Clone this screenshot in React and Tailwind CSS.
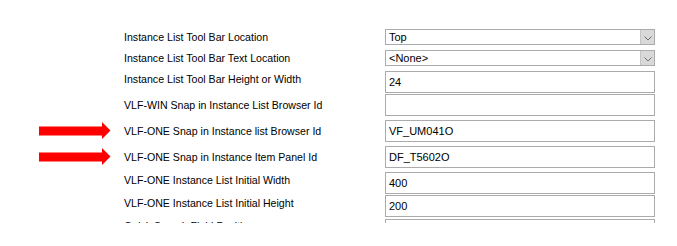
import React from 'react'

const rows = [
  { label: 'Instance List Tool Bar Location', value: 'Top', select: true, top: 'mt-[29px]', h: 'h-[16px]', lift: '' },
  { label: 'Instance List Tool Bar Text Location', value: '<None>', select: true, top: 'mt-[5px]', h: 'h-[16px]', lift: '' },
  { label: 'Instance List Tool Bar Height or Width', value: '24', top: 'mt-[5px]', h: 'h-[22px]', lift: 'pb-[5px]' },
  { label: 'VLF-WIN Snap in Instance List Browser Id', value: '', top: 'mt-[1px]', h: 'h-[22px]', lift: '' },
  { label: 'VLF-ONE Snap in Instance list Browser Id', value: 'VF_UM041O', arrow: true, top: 'mt-[4px]', h: 'h-[22px]', lift: '' },
  { label: 'VLF-ONE Snap in Instance Item Panel Id', value: 'DF_T5602O', arrow: true, top: 'mt-[4px]', h: 'h-[22px]', lift: '' },
  { label: 'VLF-ONE Instance List Initial Width', value: '400', top: 'mt-[4px]', h: 'h-[22px]', lift: 'pb-[5px]' },
  { label: 'VLF-ONE Instance List Initial Height', value: '200', top: 'mt-[1px]', h: 'h-[22px]', lift: 'pb-[5px]' },
  { label: 'Quick Search Field Position', value: '', top: 'mt-[2px]', h: 'h-[22px]', lift: 'pb-[7px]' },
]

function Arrow() {
  return (
    <svg width="72" height="18" viewBox="0 0 72 18" className="ml-[39px] block">
      <path d="M0 4.5 H63 V0 L71.5 8.5 L63 17 V13.5 H0 Z" fill="#ff0000" />
    </svg>
  )
}

function Field({ row }) {
  return (
    <div className={`relative flex w-[270px] items-center border border-[#ababab] bg-white ${row.h}`}>
      <span className="flex-1 pl-[3px] text-black">{row.value}</span>
      {row.select && (
        <span className="flex h-full w-[14px] items-center justify-center border-l border-[#c4c4c4] bg-[#d9d9d9]">
          <svg width="8" height="5" viewBox="0 0 8 5" className="mt-[3px]">
            <path d="M0.5 0.5 L4 4 L7.5 0.5" fill="none" stroke="#6d6d6d" strokeWidth="1" />
          </svg>
        </span>
      )}
    </div>
  )
}

export default function App() {
  return (
    <div
      className="h-[246px] w-[677px] bg-white text-[11px] leading-none text-black"
      style={{ fontFamily: 'Tahoma, "Liberation Sans", Arial, sans-serif' }}
    >
      <div className="flex h-[223px] flex-col overflow-hidden">
        {rows.map((row) => (
          <div key={row.label} className={`flex shrink-0 items-center ${row.top}`}>
            <div className="flex w-[124px] items-center">{row.arrow && <Arrow />}</div>
            <div className={`w-[261px] whitespace-nowrap text-[10.6px] ${row.lift}`}>{row.label}</div>
            <Field row={row} />
          </div>
        ))}
      </div>
    </div>
  )
}
